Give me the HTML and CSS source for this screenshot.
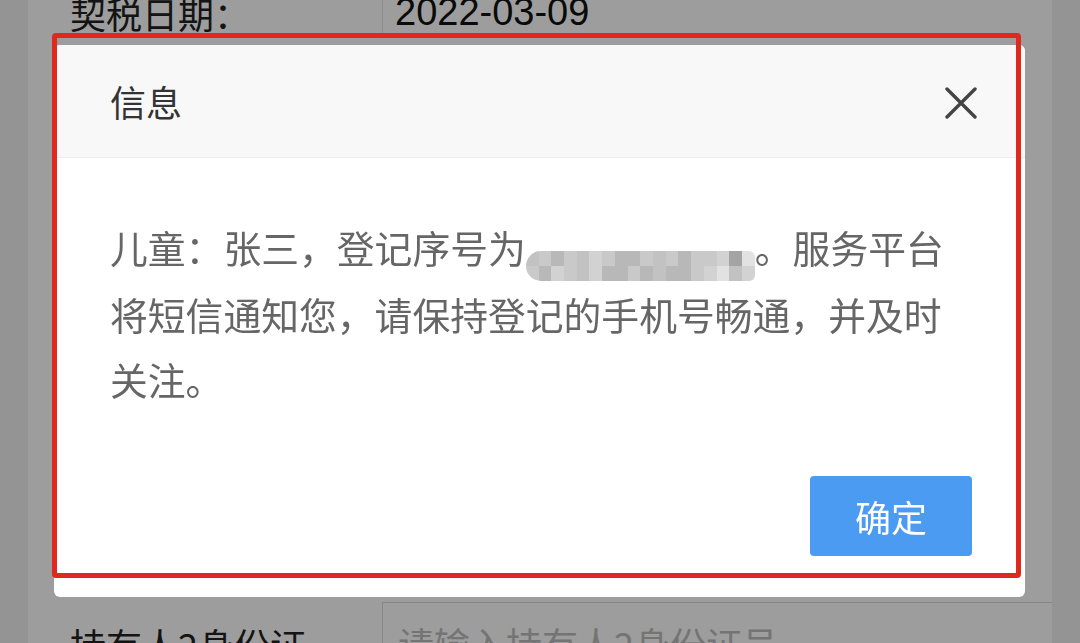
FILE: index.html
```html
<!DOCTYPE html>
<html lang="zh-CN">
<head>
<meta charset="utf-8">
<title>信息</title>
<link rel="stylesheet" href="styles.css">
</head>
<body>
<div class="page">
  <div class="row row-top">
    <div class="label">契税日期：</div>
    <div class="value">2022-03-09</div>
  </div>
  <div class="row-gap"></div>
  <div class="row row-bottom">
    <div class="label">持有人2身份证</div>
    <div class="value"><div class="input">请输入持有人2身份证号</div></div>
  </div>
</div>

<div class="overlay"></div>

<div class="modal">
  <div class="modal-head">
    <span class="title">信息</span>
    <svg class="close" viewBox="0 0 32 32" width="32" height="32" aria-hidden="true">
      <path d="M2 2 L30 30 M30 2 L2 30" stroke="#444" stroke-width="3.4" stroke-linecap="round" fill="none"/>
    </svg>
  </div>
  <div class="modal-body">
    <p class="msg">儿童：张三，登记序号为<span class="mosaic"><i class="a"></i><i class="b"></i><i class="c"></i><i class="b"></i><i class="a"></i><i class="d"></i><i class="b"></i><i class="c"></i><i class="c"></i><i class="b"></i><i class="a"></i><i class="b"></i><i class="c"></i><i class="b"></i><i class="b"></i><i class="d"></i><i class="f"></i><i class="e"></i><i class="b"></i><i class="c"></i><i class="d"></i><i class="b"></i><i class="a"></i><i class="d"></i><i class="c"></i><i class="c"></i><i class="b"></i><i class="c"></i><i class="a"></i><i class="c"></i><i class="c"></i><i class="b"></i><i class="d"></i><i class="e"></i><i class="a"></i><i class="d"></i></span>。服务平台将短信通知您，请保持登记的手机号畅通，并及时关注。</p>
    <div class="footer">
      <button class="btn">确定</button>
    </div>
  </div>
</div>

<div class="mark"></div>
</body>
</html>
```

FILE: styles.css
```css
* { box-sizing: border-box; }

html, body {
  margin: 0;
  padding: 0;
  width: 1080px;
  height: 643px;
  overflow: hidden;
}

body {
  background: #f0f0f0;
  font-family: "Noto Sans CJK SC", "Noto Sans", sans-serif;
}

.page {
  margin: 0 28px;
  background: #ffffff;
  height: 643px;
  display: flex;
  flex-direction: column;
}

.row {
  display: flex;
}

.row-top {
  height: 35px;
  align-items: flex-end;
  overflow: hidden;
}

.row-top .label {
  width: 354px;
  padding-left: 42px;
  font-size: 36px;
  line-height: 36px;
  color: #222;
  margin-bottom: 4px;
}

.row-top .value {
  flex: 1;
  height: 100%;
  border-left: 1px solid #e6e6e6;
  padding-left: 12px;
  display: flex;
  align-items: flex-end;
  font-family: "Liberation Sans", Arial, sans-serif;
  font-size: 38px;
  line-height: 38px;
  color: #111;
  padding-bottom: 4px;
}

.row-gap {
  height: 567px;
}

.row-bottom {
  flex: 1;
  overflow: hidden;
}

.row-bottom .label {
  width: 354px;
  padding-left: 42px;
  padding-top: 24px;
  font-size: 36px;
  line-height: 36px;
  color: #222;
  white-space: nowrap;
}

.row-bottom .value {
  flex: 1;
}

.input {
  border: 1px solid #dcdcdc;
  border-right: none;
  height: 80px;
  padding-left: 15px;
  padding-top: 22px;
  font-size: 36px;
  line-height: 36px;
  color: #bdbdbd;
  white-space: nowrap;
}

.overlay {
  position: fixed;
  inset: 0;
  background: rgba(0, 0, 0, 0.385);
}

.modal {
  position: absolute;
  left: 54px;
  top: 45px;
  width: 971px;
  height: 552px;
  background: #ffffff;
  border-radius: 6px;
  overflow: hidden;
  display: flex;
  flex-direction: column;
}

.modal-head {
  height: 113px;
  flex: none;
  background: #f8f8f8;
  border-bottom: 1px solid #eeeeee;
  display: flex;
  align-items: center;
  justify-content: space-between;
  padding: 0 48px 0 56px;
}

.title {
  font-size: 36px;
  color: #333;
  line-height: 40px;
}

.close {
  display: block;
  margin-top: 4px;
}

.modal-body {
  flex: 1;
  display: flex;
  flex-direction: column;
  padding: 56px 53px 41px 56px;
}

.msg {
  margin: 0;
  padding-right: 22px;
  font-size: 37.8px;
  line-height: 65px;
  color: #666;
}

.mosaic {
  display: inline-grid;
  grid-template-columns: repeat(18, 1fr);
  grid-template-rows: 1fr 1fr;
  width: 229px;
  height: 30px;
  vertical-align: -3px;
  border-radius: 15px 6px 6px 15px;
  overflow: hidden;
}

.mosaic i { display: block; }
.mosaic .a { background: #c2c2c2; }
.mosaic .b { background: #c9c9c9; }
.mosaic .c { background: #b8b8b8; }
.mosaic .d { background: #d2d2d2; }
.mosaic .e { background: #e2e2e2; }
.mosaic .f { background: #a4a4a4; }

.footer {
  margin-top: auto;
  display: flex;
  justify-content: flex-end;
}

.btn {
  width: 162px;
  height: 80px;
  border: none;
  border-radius: 4px;
  background: #4c9bf2;
  color: #ffffff;
  font-family: "Noto Sans CJK SC", "Noto Sans", sans-serif;
  font-size: 36px;
  padding: 0;
}

.mark {
  position: absolute;
  left: 52px;
  top: 33px;
  width: 969px;
  height: 545px;
  border: 5px solid #e0281f;
  border-radius: 4px;
}
```
